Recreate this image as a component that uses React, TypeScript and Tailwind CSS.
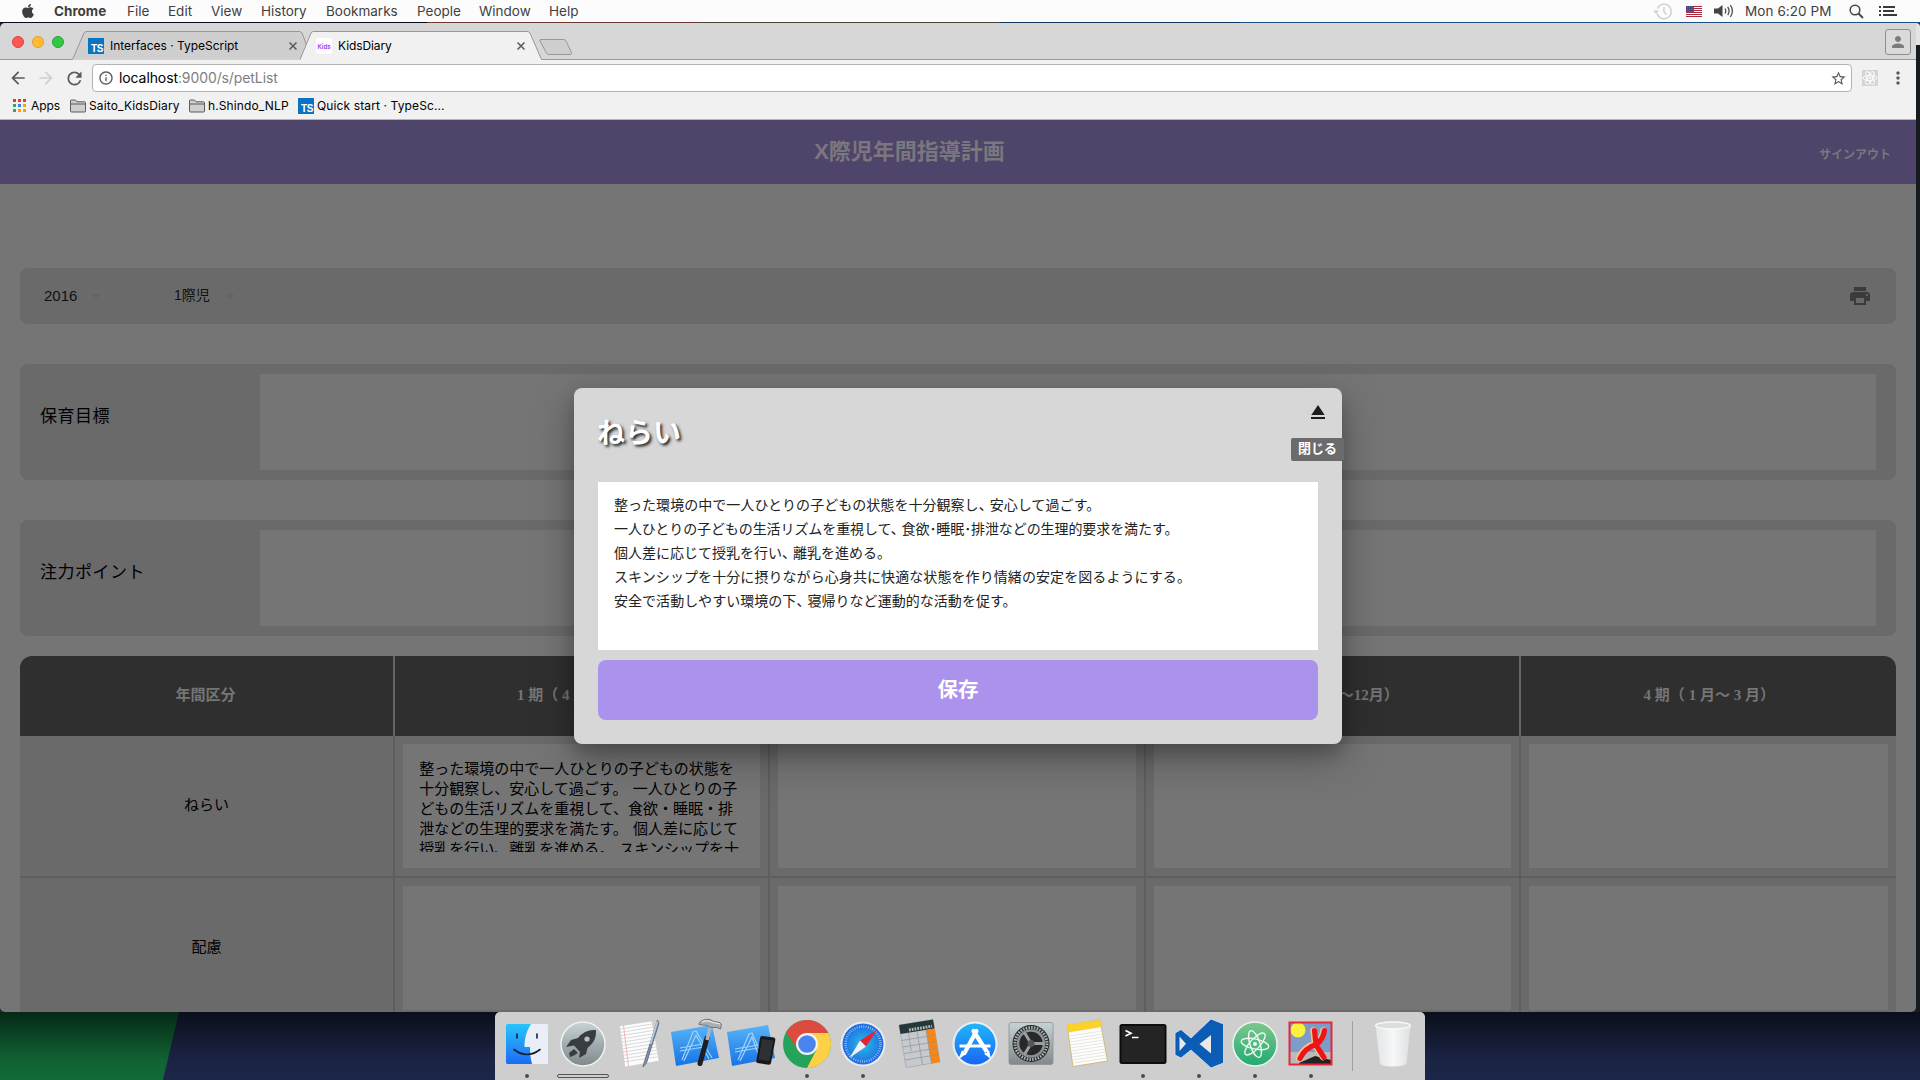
import React from "react";
import { FaApple } from "react-icons/fa";
import {
  MdArrowBack,
  MdArrowDropDown,
  MdArrowForward,
  MdEject,
  MdInfoOutline,
  MdMoreVert,
  MdPerson,
  MdPrint,
  MdRefresh,
  MdStarBorder,
} from "react-icons/md";

const UI = "font-['Inter','Noto_Sans_CJK_JP',sans-serif]";
const JP = "font-['Noto_Sans_CJK_JP',sans-serif]";
const MINCHO = "font-['Liberation_Serif','Noto_Sans_CJK_JP',serif]";

/* ---------- macOS menu bar ---------- */

const menus = [
  { label: "Chrome", cls: "w-[73px] font-bold" },
  { label: "File", cls: "w-[41px]" },
  { label: "Edit", cls: "w-[43px]" },
  { label: "View", cls: "w-[50px]" },
  { label: "History", cls: "w-[65px]" },
  { label: "Bookmarks", cls: "w-[91px]" },
  { label: "People", cls: "w-[62px]" },
  { label: "Window", cls: "w-[70px]" },
  { label: "Help", cls: "w-[40px]" },
];

function Flag() {
  return (
    <svg width="16" height="11" viewBox="0 0 16 11">
      <rect width="16" height="11" fill="#fff" />
      {[0, 2, 4, 6, 8, 10].map((y) => (
        <rect key={y} y={y} width="16" height="1" fill="#a8283c" />
      ))}
      <rect width="8" height="6" fill="#3d3a72" />
      {[1, 3, 5].map((y) =>
        [1, 3, 5, 7].map((x) => <rect key={`${x}${y}`} x={x - 0.3} y={y - 0.3} width=".8" height=".8" fill="#c9c8e0" />)
      )}
    </svg>
  );
}

function MenuBar() {
  return (
    <div className={`${UI} flex h-[22px] items-center bg-[#fcfcfc] text-[13.5px] leading-none text-[#3f3f3f]`}>
      <div className="flex w-[54px] pl-[20px]">
        <FaApple className="-mt-px size-[16px]" />
      </div>
      {menus.map((m) => (
        <span key={m.label} className={`${m.cls} whitespace-nowrap pt-px`}>
          {m.label}
        </span>
      ))}
      <div className="ml-auto flex items-center pr-[23px]">
        <svg className="mr-[13px]" width="20" height="17" viewBox="0 0 20 17" fill="none" stroke="#cdcdcd" strokeWidth="1.3">
          <path d="M4 10.5A7.3 7.3 0 1 0 4.300 5.500" />
          <path d="M11 4v5l2.500 2.500" />
          <path d="M.5 7.500 6 7.500 3 11z" fill="#cdcdcd" stroke="none" />
        </svg>
        <Flag />
        <svg className="ml-[11px]" width="22" height="16" viewBox="0 0 22 16" fill="none" stroke="#444" strokeWidth="1.2">
          <path d="M1 5.500h4L9.500 2v12L5 10.500H1z" fill="#444" stroke="none" />
          <path d="M12 5.500q1.600 2.500 0 5M14.700 3.800q2.800 4.200 0 8.400M17.400 2.200q4 5.800 0 11.600" />
        </svg>
        <span className="ml-[10px] w-[104px] whitespace-nowrap pt-px tracking-[0.08px]">Mon 6:20 PM</span>
        <svg className="mr-[15px]" width="15" height="15" viewBox="0 0 15 15" fill="none" stroke="#444" strokeWidth="1.500">
          <circle cx="6" cy="6" r="4.800" />
          <path d="m9.500 9.500 4.500 4.500" strokeWidth="1.800" />
        </svg>
        <svg width="18" height="12" viewBox="0 0 18 12" fill="#3a3a3a">
          <path d="M0 1h2v2H0zM4 1h12v2H4zM0 5h2v2H0zM4 5h11v2H4zM0 9h2v2H0zM4 9h14v2H4z" />
        </svg>
      </div>
    </div>
  );
}

/* ---------- Chrome window frame ---------- */

function TsIcon() {
  return (
    <span className="flex size-4 shrink-0 items-end justify-end bg-[#0b74c1] pr-px font-['Liberation_Sans',sans-serif] text-[10px] font-bold leading-[10px] tracking-[-0.4px] text-white">
      TS
    </span>
  );
}

function CloseX() {
  return (
    <svg width="8" height="8" viewBox="0 0 8 8" stroke="#5a5a5a" strokeWidth="1.500">
      <path d="M.5.5l7 7M7.500.5l-7 7" />
    </svg>
  );
}

function TabStrip() {
  return (
    <div className="relative flex h-[37px] rounded-tl-[5px] bg-[#d7d7d7]">
      <svg className="absolute left-0 top-0" width="1916" height="37" fill="none" stroke="#979797">
        <path d="M0 36.500H72.500L84 10Q85 8.500 87 8.500H299Q301 8.500 302 10L312 36.500" fill="#cfcfcf" />
        <path d="M300 37.500V36.500L311 10Q312 8.500 314 8.500H527Q529 8.500 530 10L541.500 36.500V37.500Z" fill="#f1f1f1" stroke="none" />
        <path d="M300 36.500L311 10Q312 8.500 314 8.500H527Q529 8.500 530 10L541.500 36.500H1916" />
        <path d="M541 16.500H563.500Q565.500 16.500 566 18L571.500 29.500Q572 31.500 570 31.500H549Q547.500 31.500 546.500 30L540 18Q539.500 16.500 541 16.500Z" fill="#cfcfcf" />
      </svg>
      <div className="relative flex w-[88px] items-center gap-2 pl-3">
        <i className="size-3 rounded-full border border-[#e2413d] bg-[#fc5753]" />
        <i className="size-3 rounded-full border border-[#e0a028] bg-[#fdbc2f]" />
        <i className="size-3 rounded-full border border-[#27a82d] bg-[#33c748]" />
      </div>
      <div className={`${UI} relative flex w-[228px] items-center pt-[9px] text-[12px] text-black`}>
        <TsIcon />
        <span className="ml-[6px] w-[179px] whitespace-nowrap tracking-[-0.02px]">Interfaces · TypeScript</span>
        <CloseX />
      </div>
      <div className={`${UI} relative flex w-[220px] items-center pt-[9px] text-[12px] text-black`}>
        <span className="flex size-4 items-center justify-center rounded-[3px] bg-white text-[6px] font-bold text-[#a04af0]">Kids</span>
        <span className="ml-[6px] w-[179px] whitespace-nowrap tracking-[-0.1px]">KidsDiary</span>
        <CloseX />
      </div>
      <div className="relative ml-auto mr-[5px] mt-[6px] flex size-[26px] items-center justify-center rounded-[3px] border border-[#8f8f8f] bg-[#dadada]">
        <MdPerson className="size-[18px] text-[#7b7b7b]" />
      </div>
    </div>
  );
}

function Toolbar() {
  return (
    <div className="flex h-[36px] items-center bg-[#f1f1f1] text-[#5a5a5a]">
      <MdArrowBack className="ml-[8px] size-[20px]" />
      <MdArrowForward className="ml-[8px] size-[20px] text-[#cfcfcf]" />
      <MdRefresh className="ml-[8px] size-[21px]" />
      <div className={`${UI} ml-[7px] flex h-[28px] w-[1760px] items-center rounded-[4px] border border-[#b2b2b2] bg-white pl-[5px] pr-[4px] text-[14px]`}>
        <MdInfoOutline className="size-[16px]" />
        <span className="ml-[5px] whitespace-nowrap pb-px tracking-[-0.1px] text-[#808080]">
          <span className="text-black">localhost</span>:9000/s/petList
        </span>
        <MdStarBorder className="ml-auto size-[17px]" />
      </div>
      <svg className="ml-[10px]" width="16" height="16" viewBox="0 0 16 16" fill="none" stroke="#fff" strokeWidth=".9">
        <rect width="16" height="16" fill="#d4d4d4" stroke="none" />
        <ellipse cx="8" cy="8" rx="7" ry="2.700" />
        <ellipse cx="8" cy="8" rx="7" ry="2.700" transform="rotate(60 8 8)" />
        <ellipse cx="8" cy="8" rx="7" ry="2.700" transform="rotate(120 8 8)" />
        <circle cx="8" cy="8" r="1" />
      </svg>
      <MdMoreVert className="ml-[10px] size-[20px]" />
    </div>
  );
}

function Folder() {
  return (
    <svg width="16" height="14" viewBox="0 0 16 14" fill="#cfcfcf" stroke="#5c5c5c">
      <path d="M.5 12V2Q.5 1 1.500 1H5.500L7 2.800H14.500Q15.500 2.800 15.500 3.800V12Q15.500 13 14.500 13H1.500Q.5 13 .5 12ZM.5 5H15.500" />
    </svg>
  );
}

const appDots = ["#e8343a", "#e8343a", "#e8343a", "#3aa757", "#3b82e8", "#f2a600", "#3aa757", "#f2a600", "#f2a600"];

function BookmarksBar() {
  return (
    <div className={`${UI} flex h-6 items-center border-b border-[#b5b5b5] bg-[#f1f1f1] pb-[4px] pl-[13px] text-[12px] tracking-[0.12px] text-black`}>
      <div className="grid grid-cols-3 gap-[2px]">
        {appDots.map((c, i) => (
          <i key={i} className="size-[3px]" style={{ background: c }} />
        ))}
      </div>
      <span className="ml-[5px] w-[39px] tracking-[-0.1px]">Apps</span>
      <Folder />
      <span className="ml-[3px] w-[100px] whitespace-nowrap">Saito_KidsDiary</span>
      <Folder />
      <span className="ml-[3px] w-[90px] whitespace-nowrap">h.Shindo_NLP</span>
      <TsIcon />
      <span className="ml-[3px] whitespace-nowrap">Quick start · TypeSc...</span>
    </div>
  );
}

/* ---------- Web page ---------- */

function GoalCard({ title }: { title: string }) {
  return (
    <section className="flex h-[116px] rounded-[8px] bg-[#6a6a6a] py-[10px] pl-[20px] pr-[20px]">
      <h2 className={`${MINCHO} w-[220px] pt-[28px] text-[17px] leading-[30px] tracking-[0.5px] text-black`}>{title}</h2>
      <div className="flex-1 bg-[#757575]" />
    </section>
  );
}

const periods = ["年間区分", "１期（４月〜５月）", "２期（６月〜８月）", "３期（９月〜12月）", "４期（１月〜３月）"];

/* Full-width digits are drawn as serif figures in a one-em box. */
function Period({ text }: { text: string }) {
  return (
    <span className="-ml-[2px]">
      {[...text].map((ch, i) => {
        const n = "０１２３４５６７８９".indexOf(ch);
        return n < 0 ? (
          <React.Fragment key={i}>{ch}</React.Fragment>
        ) : (
          <span key={i} className="inline-block w-[15px] text-center">
            {n}
          </span>
        );
      })}
    </span>
  );
}

const aim = [
  "整った環境の中で一人ひとりの子どもの状態を",
  "十分観察し、安心して過ごす。 一人ひとりの子",
  "どもの生活リズムを重視して、食欲・睡眠・排",
  "泄などの生理的要求を満たす。 個人差に応じて",
  "授乳を行い、離乳を進める。 スキンシップを十",
];

const rows: { name: string; cells: string[][] }[] = [
  { name: "ねらい", cells: [aim, [], [], []] },
  { name: "配慮", cells: [[], [], [], []] },
];

function PlanTable() {
  return (
    <div className={`${MINCHO} overflow-hidden rounded-t-[12px] text-[15px] leading-[20px]`}>
      <div className="grid grid-cols-5 bg-[#2f2f2f] font-bold text-[#757575]">
        {periods.map((p) => (
          <div key={p} className="flex h-[80px] items-center justify-center whitespace-nowrap border-r-2 border-[#666] pb-[3px] last:border-r-0">
            <Period text={p} />
          </div>
        ))}
      </div>
      {rows.map((r) => (
        <div key={r.name} className="grid grid-cols-5 bg-[#6a6a6a] text-black">
          <div className="flex h-[142px] items-center justify-center border-b-2 border-r-2 border-[#5e5e5e] pb-[3px]">{r.name}</div>
          {r.cells.map((c, i) => (
            <div key={i} className="h-[142px] border-b-2 border-r-2 border-[#5e5e5e] p-2 last:border-r-0">
              <div className="h-[124px] bg-[#757575] px-4 pb-4 pt-[15px]">
                <div className="h-[93px] overflow-hidden">
                  {c.map((line) => (
                    <p key={line} className="h-[20px] whitespace-nowrap [word-spacing:1.5px]">
                      {line}
                    </p>
                  ))}
                </div>
              </div>
            </div>
          ))}
        </div>
      ))}
    </div>
  );
}

function Page() {
  return (
    <div className={`${JP} h-[892px] overflow-hidden rounded-b-[5px] bg-[#757575]`}>
      <header className="flex h-[64px] items-center bg-[#4f4469] font-bold text-[#7a777e]">
        <h1 className="w-[1819px] pb-[4px] text-center text-[22px]">
          <span className="font-['Liberation_Sans',sans-serif]">X</span>際児年間指導計画
        </h1>
        <span className="whitespace-nowrap pt-[3px] text-[12px]">サインアウト</span>
      </header>
      <main className="flex flex-col px-[20px] pt-[84px]">
        <div className="flex h-[56px] items-center rounded-[8px] bg-[#6a6a6a] pl-[24px] pr-[24px] font-['Liberation_Sans','Noto_Sans_CJK_JP',sans-serif] text-[15px] text-[#111]">
          <span className="w-[41px]">2016</span>
          <MdArrowDropDown className="size-[22px] text-[#646464]" />
          <span className="ml-[67px] w-[45px] whitespace-nowrap pb-px text-[14px]">1際児</span>
          <MdArrowDropDown className="size-[22px] text-[#646464]" />
          <MdPrint className="ml-auto size-[24px] text-[#3b3b3b]" />
        </div>
        <div className="mt-[40px] flex flex-col gap-[40px]">
          <GoalCard title="保育目標" />
          <GoalCard title="注力ポイント" />
        </div>
        <div className="mt-[20px]">
          <PlanTable />
        </div>
      </main>
    </div>
  );
}

const lines = [
  { cls: "tracking-[0.04px]", text: "整った環境の中で一人ひとりの子どもの状態を十分観察し、安心して過ごす。" },
  { cls: "tracking-[-0.09px]", text: "一人ひとりの子どもの生活リズムを重視して、食欲･睡眠･排泄などの生理的要求を満たす。" },
  { cls: "", text: "個人差に応じて授乳を行い、離乳を進める。" },
  { cls: "tracking-[0.08px]", text: "スキンシップを十分に摂りながら心身共に快適な状態を作り情緒の安定を図るようにする。" },
  { cls: "tracking-[0.04px]", text: "安全で活動しやすい環境の下、寝帰りなど運動的な活動を促す。" },
];

function Dialog() {
  return (
    <div
      className={`${JP} absolute left-[574px] top-[388px] h-[356px] w-[768px] rounded-[8px] bg-[#d7d7d7] p-[24px] shadow-[0_14px_45px_rgba(0,0,0,0.25),0_10px_18px_rgba(0,0,0,0.22)]`}
    >
      <div className="flex h-[70px] justify-between">
        <h2 className="-ml-px text-[28px] font-bold leading-[38px] text-white [text-shadow:2px_2px_3px_rgba(0,0,0,0.85)]">ねらい</h2>
        <MdEject className="-mr-[12px] -mt-[12px] size-[24px] text-[#1c1c1c]" />
      </div>
      <div className="h-[168px] bg-white px-[16px] py-[10px] text-[14px] leading-[24px] text-[#222]">
        {lines.map((l) => (
          <p key={l.text} className={`${l.cls} whitespace-nowrap`}>
            {l.text.split("、").map((part, i, all) => (
              <React.Fragment key={i}>
                {part}
                {i < all.length - 1 && <span className="-mr-[3px]">、</span>}
              </React.Fragment>
            ))}
          </p>
        ))}
      </div>
      <button className="mt-[10px] h-[60px] w-full rounded-[8px] bg-[#ab92ec] pb-[4px] text-[20.500px] font-bold text-white">保存</button>
      <span className="absolute left-[717px] top-[50px] h-[23px] w-[53px] rounded-[2px] bg-[#6b6b6b] pl-[7px] text-[13px] font-bold leading-[20px] text-white">
        閉じる
      </span>
    </div>
  );
}

/* ---------- Dock ---------- */

const icons: { id: string; running?: boolean; art: React.ReactNode }[] = [
  {
    id: "finder",
    running: true,
    art: (
      <>
        <rect x="3" y="4" width="42" height="40" rx="1.500" fill="#e9eef8" />
        <path d="M4.500 4H28C23 12 21.500 19 21.500 27H27Q27 37 29 44H4.500Q3 44 3 42.500V5.500Q3 4 4.500 4Z" fill="url(#finder)" />
        <path d="M14 14v4M34 14v4" stroke="#152038" strokeWidth="1.600" strokeLinecap="round" />
        <path d="M11 29.500Q24 39.500 37 29.500" fill="none" stroke="#152038" strokeWidth="1.600" strokeLinecap="round" />
      </>
    ),
  },
  {
    id: "launchpad",
    art: (
      <>
        <circle cx="24" cy="24" r="22" fill="url(#silver)" stroke="#eef3f4" strokeWidth="1.500" />
        <path d="M37 10Q26 9 19 18L12 20 7 27 15 25.500 21 32 20 38 27 34 28.500 28Q38 21 37 10Z" fill="#3a3d40" />
        <circle cx="28" cy="19" r="2.600" fill="#b8c2c5" />
        <path d="M15 29 10 33 11 37 14 36 19 33Z" fill="#3a3d40" />
      </>
    ),
  },
  {
    id: "textedit",
    art: (
      <g>
        <path d="M4.500 6 37 1 44 41 10 47Z" fill="#fdfdfd" stroke="#c9c9c9" strokeWidth=".6" />
        {[0, 1, 2, 3, 4, 5, 6, 7, 8, 9, 10].map((i) => (
          <path key={i} d={`M${5.2 + i * 0.4} ${9 + i * 3.3}l33-5.200`} stroke="#c8c8c8" strokeWidth=".7" />
        ))}
        <path d="M8.500 5.500 13.500 46" stroke="#f3a5a5" strokeWidth=".8" />
        <path d="M42.500 0 29 43 28 47 31.500 43 44 3Z" fill="#7f90a3" stroke="#59636e" strokeWidth=".8" />
        <path d="M42.500 1.500 35.500 24" stroke="#b9cbe0" strokeWidth="1.600" />
      </g>
    ),
  },
  {
    id: "xcode",
    art: (
      <>
        <path d="M0 12 41 5 48 38 5 46Z" fill="url(#blue)" />
        <path d="M11 40 22 12 25 11 41 38M13 41 25 15 38 39M9 28 32 24 M9 31 33 27" fill="none" stroke="#9fd3fb" strokeWidth="1.200" />
        <path d="M36 18 29 43.500" stroke="#1d1f22" strokeWidth="5" strokeLinecap="round" />
        <path d="M40 4 36 20" stroke="#aeb4b9" strokeWidth="3.500" />
        <path d="M28 3Q32-1.500 39-.5L43 1.500 49 2.500 50.500 4.500 49.500 9 46 7.500 40 7.500 36 5.500 28 4.500Z" fill="#a9afb3" stroke="#5f6468" strokeWidth=".8" />
        <path d="M31 2Q36-.3 42 2.500L49 4" fill="none" stroke="#eef0f1" strokeWidth="1.200" />
      </>
    ),
  },
  {
    id: "simulator",
    art: (
      <>
        <path d="M0 12 41 5 48 38 5 46Z" fill="url(#blue)" />
        <path d="M11 40 22 14 25 13 36 38M13 41 25 17 33 39M8 29 31 25M8 32 31 28" fill="none" stroke="#9fd3fb" strokeWidth="1.200" />
        <path d="M35 16 47 17.500Q48.500 18 48.300 20L44 43Q43.500 45 41.500 44.800L30.500 43Q29 42.500 29.300 41L33 18Q33.500 16 35 16Z" fill="#17181a" />
        <path d="M35 19 46.500 20.500 42.500 41 31.500 39.500Z" fill="#2e3033" />
      </>
    ),
  },
  {
    id: "chrome",
    running: true,
    art: (
      <>
        <circle cx="24" cy="24" r="24" fill="#25a35a" />
        <path d="M33.500 29.500 24 48A24 24 0 0 0 45.300 13H24Z" fill="#fdd046" />
        <path d="M3.220 12A24 24 0 0 1 45.300 13H24L14.500 29.500Z" fill="#dd4b3e" />
        <circle cx="24" cy="24" r="11" fill="#f4f4f4" />
        <circle cx="24" cy="24" r="8.800" fill="#4a84ee" />
      </>
    ),
  },
  {
    id: "safari",
    running: true,
    art: (
      <>
        <circle cx="24" cy="24" r="22.500" fill="#e9edf0" />
        <circle cx="24" cy="24" r="20.500" fill="url(#safari)" />
        <circle cx="24" cy="24" r="17.500" fill="none" stroke="#a8d4fa" strokeWidth="2.500" strokeDasharray=".7 1.590" />
        <path d="M38 10 21 20.500 27 26.500Z" fill="#e8222e" />
        <path d="M10.500 38 21 20.500 27 26.500Z" fill="#f1f1f1" />
      </>
    ),
  },
  {
    id: "calculator",
    art: (
      <>
        <path d="M4 5 38-.5 45 42 11 47.500Z" fill="#c6c9cd" stroke="#9a9ea2" strokeWidth=".6" />
        <path d="M4 5 38-.5 39.500 8.500 5.500 14Z" fill="#26363a" />
        <path d="M31 10 39.500 8.500 45 42 36.500 43.500Z" fill="#f98515" />
        <path d="M6.600 20.500 41 15M7.800 27 42 21.500M9 33.500 43 28M10 40 44 34.500M13.500 13 16.300 31M22 11.500 27.500 45M31 10 36.500 43.500" stroke="#8f9498" strokeWidth=".7" />
        <path d="M14 10 37 6.200" stroke="#a9bcb4" strokeWidth="3" strokeDasharray="1.800 1" />
      </>
    ),
  },
  {
    id: "appstore",
    art: (
      <>
        <circle cx="24" cy="24" r="22.500" fill="#eceff1" />
        <circle cx="24" cy="24" r="20.500" fill="url(#store)" />
        <path d="M8.500 26H39.500" stroke="#fff" strokeWidth="3" />
        <path d="M25.500 11 13.500 33M22.500 11 36 32" stroke="#fff" strokeWidth="4.200" strokeLinecap="round" />
        <path d="m12 31-2 5 4-3M37 31l1 5-4-3" stroke="#fff" strokeWidth="2.500" />
      </>
    ),
  },
  {
    id: "preferences",
    art: (
      <>
        <rect x="2" y="2.500" width="44" height="42" rx="2" fill="url(#silver)" stroke="#8c9296" strokeWidth=".8" />
        <circle cx="24" cy="23.500" r="18.500" fill="#26282a" />
        <circle cx="24" cy="23.500" r="16" fill="none" stroke="#a9aeb1" strokeWidth="3" strokeDasharray="1.600 1.180" />
        <circle cx="24" cy="23.500" r="13" fill="none" stroke="#8c9194" strokeWidth="2.600" />
        <path d="M24 23.500H37M24 23.500 17.500 12.500M24 23.500 17.500 34.500" stroke="#9a9fa2" strokeWidth="3" />
        <circle cx="24" cy="23.500" r="3.500" fill="#54585b" />
      </>
    ),
  },
  {
    id: "notes",
    art: (
      <>
        <path d="M4 5 37 0 44.500 41 10 46.500Z" fill="#fdfdfb" stroke="#c8b45c" strokeWidth=".8" />
        <path d="M3.500 4.500 37 0 38.500 7 5 12.500Z" fill="#fcd12c" />
        {[0, 1, 2, 3, 4, 5, 6, 7, 8, 9].map((i) => (
          <path key={i} d={`M${6 + i * 0.5} ${16 + i * 3}l33-5`} stroke="#dcdcdc" strokeWidth=".7" />
        ))}
      </>
    ),
  },
  {
    id: "terminal",
    running: true,
    art: (
      <>
        <rect x="1.500" y="5" width="45" height="38" rx="1.500" fill="#242424" stroke="#0d0d0d" strokeWidth="2" />
        <path d="m6.500 10.500 5.500 2.800-5.500 2.700M13 17.500h6.500" fill="none" stroke="#fff" strokeWidth="1.700" />
      </>
    ),
  },
  {
    id: "vscode",
    running: true,
    art: (
      <>
        <path d="M36-1 48.500 4V43L36 48 16 30 6 38 0 35V13L6 9.500 16 18Z" fill="#0a5cb4" stroke="#d9e5f2" strokeWidth=".8" />
        <path d="M4.500 16.500V31L11 23.700ZM36 15 24.500 24 36 33.500Z" fill="#e6e8ea" />
      </>
    ),
  },
  {
    id: "atom",
    running: true,
    art: (
      <>
        <circle cx="24" cy="24" r="22" fill="url(#atom)" stroke="#eef3f0" strokeWidth="1.500" />
        <g fill="none" stroke="#eef8f1" strokeWidth="1.400">
          <ellipse cx="24" cy="24" rx="14" ry="5" transform="rotate(12 24 24)" />
          <ellipse cx="24" cy="24" rx="14" ry="5" transform="rotate(72 24 24)" />
          <ellipse cx="24" cy="24" rx="14" ry="5" transform="rotate(-48 24 24)" />
        </g>
        <circle cx="24" cy="24" r="2" fill="#eef8f1" />
      </>
    ),
  },
  {
    id: "xquartz",
    running: true,
    art: (
      <>
        <rect x="2.500" y="2.500" width="42" height="42" fill="#7f9bc8" />
        <path d="M3 32H44V44H3Z" fill="#b9babc" />
        <path d="M12 43 28 36 44 40V44H12Z" fill="#222" />
        <circle cx="11" cy="10" r="7.500" fill="#fdf03c" />
        <path d="M26.500 10.500 28 24Q17 27 12 38M36.500 10.500Q35 20 28 25L36 37" fill="none" stroke="#f3c489" strokeWidth="6.500" strokeLinecap="round" />
        <path d="M27.500 10.500 29 24.500Q18 28 13 38.500M37.500 10.500Q36 20 29 25L37 37.500" fill="none" stroke="#ee1418" strokeWidth="5.200" strokeLinecap="round" />
        <rect x="2.500" y="2.500" width="42" height="42" fill="none" stroke="#e2283a" strokeWidth="2" />
      </>
    ),
  },
];

const trash = (
  <>
    <path d="M6.500 5 41.500 5 37.500 43Q36.500 46.500 24 46.500T11 43Z" fill="url(#bin)" />
    <ellipse cx="24" cy="5.500" rx="17.500" ry="3.500" fill="#dcdddd" stroke="#fafafa" strokeWidth="1.300" />
  </>
);

function Dock() {
  return (
    <div className="absolute left-[495px] top-[1012px] flex h-[68px] w-[930px] rounded-t-[5px] bg-[#cecece] pl-[4px]">
      <svg className="absolute size-0">
        <defs>
          <linearGradient id="finder" x2="0" y2="1"><stop stopColor="#27c4fb" /><stop offset="1" stopColor="#1c6cf5" /></linearGradient>
          <linearGradient id="silver" x2="0" y2="1"><stop stopColor="#c6d3d6" /><stop offset="1" stopColor="#81888b" /></linearGradient>
          <linearGradient id="blue" x2="0" y2="1"><stop stopColor="#57b4f7" /><stop offset="1" stopColor="#1673e6" /></linearGradient>
          <radialGradient id="safari"><stop stopColor="#23c2e8" /><stop offset="1" stopColor="#2368e2" /></radialGradient>
          <linearGradient id="store" x2="0" y2="1"><stop stopColor="#1fb6fb" /><stop offset="1" stopColor="#1a66f2" /></linearGradient>
          <linearGradient id="atom" x2="0" y2="1"><stop stopColor="#7fc78d" /><stop offset="1" stopColor="#1fab72" /></linearGradient>
          <linearGradient id="bin" x2="1" y2="0"><stop stopColor="#e3e4e5" /><stop offset=".5" stopColor="#f6f7f8" /><stop offset="1" stopColor="#dfe0e1" /></linearGradient>
        </defs>
      </svg>
      {icons.map((ic) => (
        <div key={ic.id} className="flex w-[56px] flex-col items-center pt-[8px]">
          <svg className="overflow-visible" width="48" height="48" viewBox="0 0 48 48">
            {ic.art}
          </svg>
          {ic.running && <i className="mt-[6px] size-[4px] rounded-full bg-[#4c4c4c]" />}
          {ic.id === "launchpad" && <i className="mt-[6px] h-[4px] w-[52px] rounded-[2px] border border-[#555]" />}
        </div>
      ))}
      <i className="ml-[13px] mt-[9px] h-[50px] w-px bg-[#a0a0a0]" />
      <svg className="ml-[16px] mt-[8px] overflow-visible" width="48" height="48" viewBox="0 0 48 48">
        {trash}
      </svg>
    </div>
  );
}

export default function App() {
  return (
    <div className="relative h-[1080px] w-[1920px] overflow-hidden bg-[#1b2444]">
      <MenuBar />
      <div className="flex h-[1px] bg-[#0a0820]">
        <i className="ml-[427px] w-[273px] bg-[#6e3a2c]" />
        <i className="w-[300px] bg-[#4a4030]" />
        <i className="w-[240px] bg-[#123a5c]" />
        <i className="flex-1 bg-[#1b4f86]" />
      </div>
      <div className="flex h-[989px]">
        <div className="w-[1916px] shrink-0">
          <TabStrip />
          <Toolbar />
          <BookmarksBar />
          <Page />
        </div>
        <div className="flex w-[4px] flex-col">
          <i className="h-[22px] rounded-tr-[4px] bg-[#e4e4e4]" />
          <i className="flex-1 bg-[#151b1f]" />
        </div>
      </div>
      <svg className="block" width="1920" height="68">
        <defs>
          <linearGradient id="fade" x2="0" y2="1">
            <stop stopColor="#000" stopOpacity=".62" />
            <stop offset=".7" stopColor="#000" stopOpacity=".08" />
            <stop offset="1" stopColor="#000" stopOpacity="0" />
          </linearGradient>
        </defs>
        <rect width="1920" height="68" fill="#1c2649" />
        <path d="M0 0H179L163 68H0Z" fill="#116a38" />
        <rect width="1920" height="68" fill="url(#fade)" />
      </svg>
      <Dock />
      <Dialog />
    </div>
  );
}
